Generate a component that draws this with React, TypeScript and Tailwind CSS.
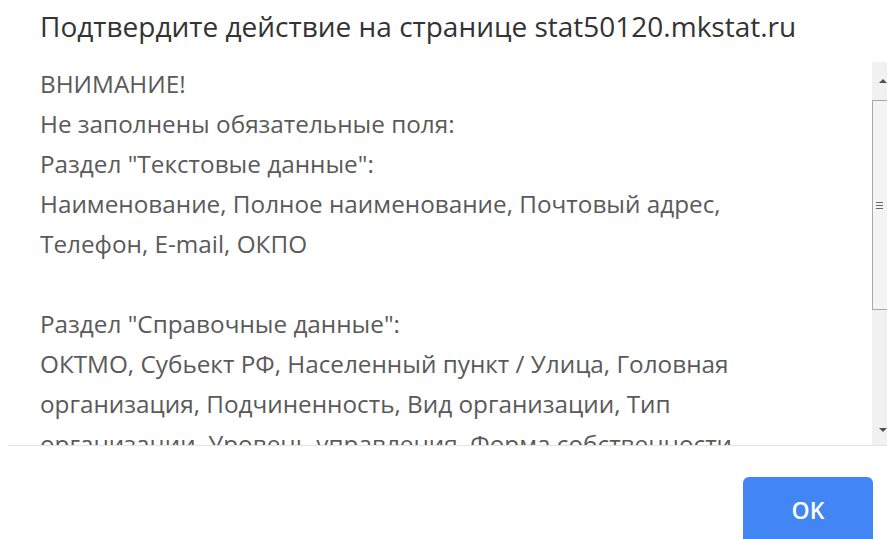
import React from "react";

const lines = [
  "ВНИМАНИЕ!",
  "Не заполнены обязательные поля:",
  'Раздел "Текстовые данные":',
  "Наименование, Полное наименование, Почтовый адрес,",
  "Телефон, E-mail, ОКПО",
  "",
  'Раздел "Справочные данные":',
  "ОКТМО, Субьект РФ, Населенный пункт / Улица, Головная",
  "организация, Подчиненность, Вид организации, Тип",
  "организации, Уровень управления, Форма собственности",
  "",
];

function Scrollbar() {
  return (
    <div className="flex h-full w-[15px] shrink-0 flex-col bg-[#f1f1f1]">
      {/* up arrow */}
      <div className="flex h-[38px] shrink-0 items-center justify-center pl-[6px]">
        <div className="h-0 w-0 border-x-[4px] border-b-[4px] border-x-transparent border-b-[#505050]" />
      </div>
      {/* thumb */}
      <div className="flex h-[210px] shrink-0 items-center border-y border-l border-[#a8a8a8] bg-[#f4f4f4] pl-[3px]">
        <div className="flex flex-col gap-[2px]">
          <div className="h-px w-[7px] bg-[#666]" />
          <div className="h-px w-[7px] bg-[#666]" />
          <div className="h-px w-[7px] bg-[#666]" />
        </div>
      </div>
      <div className="flex-1" />
      {/* down arrow */}
      <div className="flex h-[30px] shrink-0 items-center justify-center pl-[6px]">
        <div className="h-0 w-0 border-x-[4px] border-t-[4px] border-x-transparent border-t-[#505050]" />
      </div>
    </div>
  );
}

export default function App() {
  return (
    <main
      className="flex h-[539px] w-[887px] flex-col overflow-hidden bg-white"
      style={{ fontFamily: '"Open Sans", "Noto Sans", sans-serif' }}
    >
      <h1 className="h-[62px] shrink-0 whitespace-nowrap pl-[40px] pt-[6px] text-[28px] leading-[40px] text-[#333]">
        Подтвердите действие на странице stat50120.mkstat.ru
      </h1>

      <div className="ml-[8px] flex h-[384px] shrink-0 border-b border-[#e4e4e4]">
        <div className="flex-1 overflow-hidden pl-[32px] pt-[2px] text-[24.3px] leading-[40px] text-[#5a5a5a]">
          {lines.map((line, i) => (
            <p key={i} className="h-[40px] whitespace-nowrap">
              {line}
            </p>
          ))}
        </div>
        <Scrollbar />
      </div>

      <div className="flex shrink-0 justify-end pr-[14px] pt-[31px]">
        <button
          type="button"
          className="h-[70px] w-[130px] rounded-[6px] bg-[#4285f4] pb-[3px] text-[23px] font-semibold text-white"
        >
          OK
        </button>
      </div>
    </main>
  );
}
